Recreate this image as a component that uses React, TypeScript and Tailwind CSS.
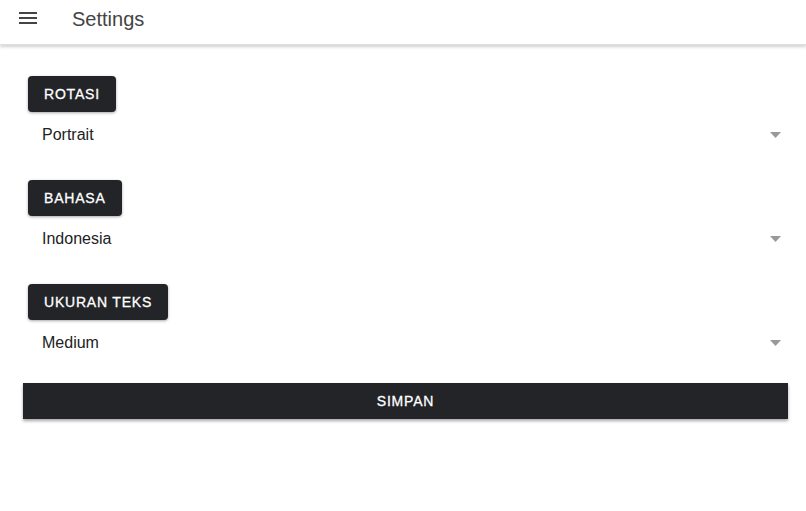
import React from "react";

const groups = [
  { label: "ROTASI", value: "Portrait" },
  { label: "BAHASA", value: "Indonesia" },
  { label: "UKURAN TEKS", value: "Medium" },
];

const App = () => {
  return (
    <div className="w-[806px] h-[511px] bg-white font-['Liberation_Sans',Arial,sans-serif] overflow-hidden">
      <header className="h-[45px] flex items-center shadow-[0_2px_3px_rgba(0,0,0,0.18)] border-b border-[#e0e0e0]">
        <div className="w-[72px] flex items-center pl-[19px]">
          <svg width="18" height="12" viewBox="0 0 18 12" className="mt-[-8px]">
            <rect x="0" y="0" width="18" height="2" fill="#444" />
            <rect x="0" y="5" width="18" height="2" fill="#444" />
            <rect x="0" y="10" width="18" height="2" fill="#444" />
          </svg>
        </div>
        <h1 className="text-[20px] text-[#444] mt-[-7px]">Settings</h1>
      </header>

      <main className="pt-[31px] px-[23px]">
        {groups.map((g) => (
          <div key={g.label} className="h-[104px]">
            <div className="ml-[5px] inline-flex items-center h-[36px] px-[16px] rounded-[4px] bg-[#232428] text-white text-[14px] font-medium tracking-[0.8px] shadow-[0_1px_3px_rgba(0,0,0,0.35)] [-webkit-text-stroke:0.3px_white]">
              {g.label}
            </div>
            <div className="flex items-center justify-between h-[45px] pl-[19px] pr-[2px] text-[16px] text-[#222]">
              <span>{g.value}</span>
              <svg width="11" height="6" viewBox="0 0 11 6">
                <path d="M0 0 L11 0 L5.5 6 Z" fill="#999" />
              </svg>
            </div>
          </div>
        ))}
        <button className="block w-[765px] h-[36px] mt-[-5px] bg-[#232428] text-white text-[14px] font-medium tracking-[0.8px] shadow-[0_2px_3px_rgba(0,0,0,0.35)] [-webkit-text-stroke:0.3px_white]">
          SIMPAN
        </button>
      </main>
    </div>
  );
};

export default App;
